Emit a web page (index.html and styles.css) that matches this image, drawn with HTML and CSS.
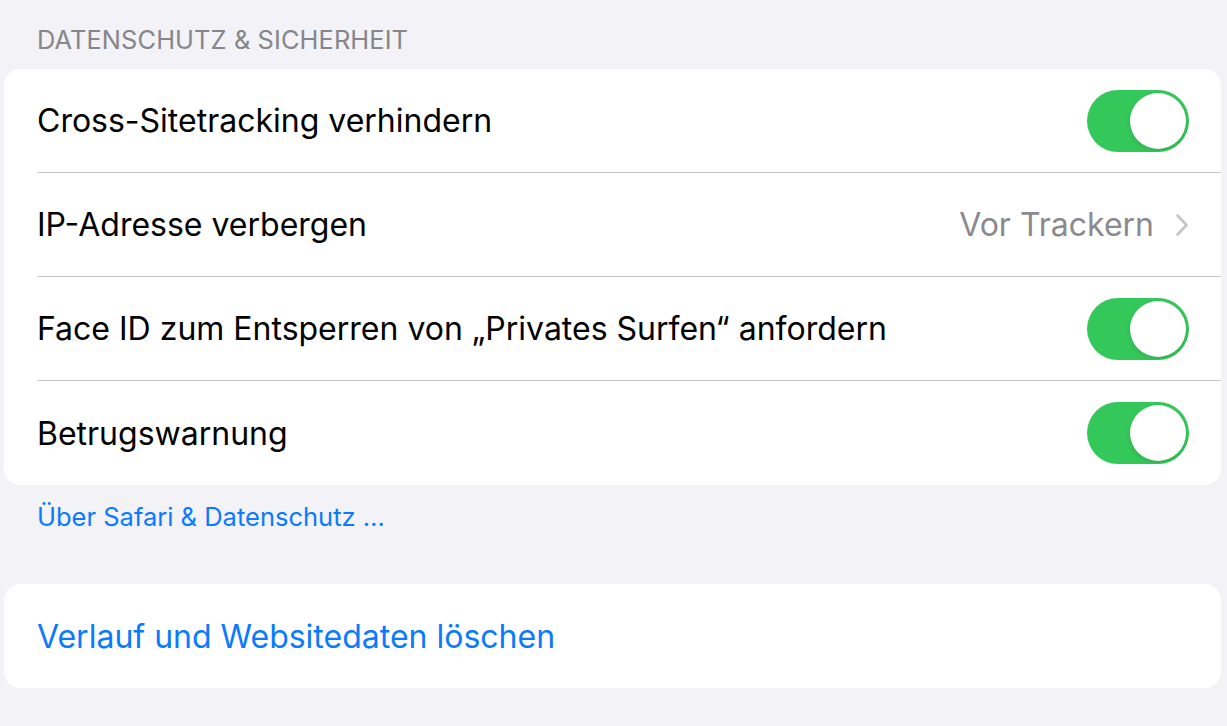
FILE: index.html
```html
<!DOCTYPE html>
<html lang="de">
<head>
<meta charset="utf-8">
<link rel="stylesheet" href="styles.css">
</head>
<body>
<div class="page">
  <div class="section-header">DATENSCHUTZ &amp; SICHERHEIT</div>
  <div class="card">
    <div class="row">
      <div class="row-inner">
        <span class="label">Cross-Sitetracking verhindern</span>
        <span class="toggle"><span class="knob"></span></span>
      </div>
    </div>
    <div class="row">
      <div class="row-inner">
        <span class="label">IP-Adresse verbergen</span>
        <span class="detail">Vor Trackern
          <svg class="chevron" width="14" height="24" viewBox="0 0 14 24"><path d="M2.5 2.5 L11.5 12 L2.5 21.5" fill="none" stroke="#c4c4c7" stroke-width="2.6" stroke-linecap="round" stroke-linejoin="round"/></svg>
        </span>
      </div>
    </div>
    <div class="row">
      <div class="row-inner">
        <span class="label">Face ID zum Entsperren von „Privates Surfen“ anfordern</span>
        <span class="toggle"><span class="knob"></span></span>
      </div>
    </div>
    <div class="row last">
      <div class="row-inner">
        <span class="label">Betrugswarnung</span>
        <span class="toggle"><span class="knob"></span></span>
      </div>
    </div>
  </div>
  <div class="section-footer">Über Safari &amp; Datenschutz …</div>
  <div class="card">
    <div class="row last">
      <div class="row-inner">
        <span class="label link">Verlauf und Websitedaten löschen</span>
      </div>
    </div>
  </div>
</div>
</body>
</html>
```

FILE: styles.css
```css
html, body {
  margin: 0;
  padding: 0;
  background: #f2f2f7;
  font-family: Inter, "Noto Sans", "Liberation Sans", sans-serif;
  -webkit-font-smoothing: antialiased;
}
.page {
  width: 1227px;
  height: 726px;
  padding: 0 6px 0 4px;
  box-sizing: border-box;
  overflow: hidden;
}
.section-header {
  height: 69px;
  box-sizing: border-box;
  padding: 27px 0 0 33px;
  font-size: 25.4px;
  line-height: 26px;
  color: #86868b;
  letter-spacing: 0.1px;
}
.card {
  background: #ffffff;
  border-radius: 16px;
  overflow: hidden;
}
.row {
  height: 104px;
  padding-left: 33px;
}
.row-inner {
  height: 104px;
  box-sizing: border-box;
  border-bottom: 1px solid #c8c8cc;
  display: flex;
  align-items: center;
  justify-content: space-between;
  padding-right: 32px;
}
.row.last .row-inner {
  border-bottom: none;
}
.label {
  font-size: 32px;
  color: #000000;
  letter-spacing: 0;
}
.label.link {
  color: #0a7aff;
}
.detail {
  display: flex;
  align-items: center;
  gap: 21px;
  font-size: 32px;
  color: #8a8a8e;
}
.chevron {
  display: block;
}
.toggle {
  width: 102px;
  height: 62px;
  border-radius: 31px;
  background: #34c759;
  display: flex;
  align-items: center;
  justify-content: flex-end;
  padding: 3px;
  box-sizing: border-box;
}
.knob {
  width: 56px;
  height: 56px;
  border-radius: 50%;
  background: #ffffff;
  box-shadow: 0 2px 4px rgba(0,0,0,0.12);
}
.section-footer {
  height: 99px;
  box-sizing: border-box;
  padding: 18px 0 0 33px;
  font-size: 25.5px;
  line-height: 28px;
  color: #0a7aff;
}
```
